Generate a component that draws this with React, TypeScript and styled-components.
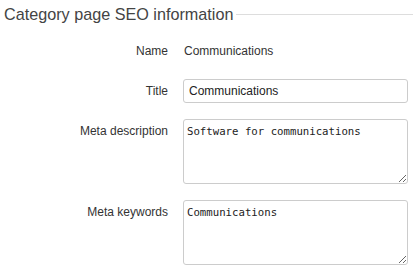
import React from "react";
import styled, { createGlobalStyle } from "styled-components";

const Global = createGlobalStyle`
  html, body { margin: 0; padding: 0; background: #fff; }
  body { font-family: "Liberation Sans", Arial, sans-serif; color: #333; }
`;

const Page = styled.div`
  padding: 0 5px 0 4px;
`;

const Legend = styled.div`
  display: flex;
  align-items: center;
  gap: 3px;
  height: 29px;
  margin-bottom: 10px;
`;

const LegendText = styled.span`
  font-size: 16.2px;
  color: #444;
  white-space: nowrap;
`;

const LegendLine = styled.span`
  flex: 1;
  height: 1px;
  background: #ddd;
  margin-right: -5px;
`;

const Form = styled.div`
  display: grid;
  grid-template-columns: 164px 1fr;
  column-gap: 15px;
  row-gap: 16px;
`;

const Label = styled.div<{ $top?: boolean }>`
  font-size: 12px;
  text-align: right;
  align-self: ${(p) => (p.$top ? "start" : "center")};
  padding-top: ${(p) => (p.$top ? "5px" : "0")};
  margin-top: ${(p) => (p.$top ? "0" : "-1px")};
  color: #333;
`;

const Value = styled.div`
  font-size: 12px;
  height: 24px;
  line-height: 24px;
  padding-left: 1px;
  color: #333;
`;

const TextInput = styled.input`
  box-sizing: border-box;
  width: 100%;
  height: 24px;
  border: 1px solid #ccc;
  border-radius: 3px;
  padding: 0 5px;
  font-family: "Liberation Sans", Arial, sans-serif;
  font-size: 12px;
  color: #222;
  outline: none;
`;

const TextArea = styled.textarea`
  box-sizing: border-box;
  width: 100%;
  height: 65px;
  border: 1px solid #ccc;
  border-radius: 3px;
  padding: 5px 3px 4px;
  font-family: "DejaVu Sans Mono", "Liberation Mono", monospace;
  font-size: 10.7px;
  color: #222;
  outline: none;
  display: block;
`;

export default function App() {
  return (
    <Page>
      <Global />
      <Legend>
        <LegendText>Category page SEO information</LegendText>
        <LegendLine />
      </Legend>
      <Form>
        <Label>Name</Label>
        <Value>Communications</Value>
        <Label>Title</Label>
        <TextInput defaultValue="Communications" />
        <Label $top>Meta description</Label>
        <TextArea defaultValue="Software for communications" />
        <Label $top>Meta keywords</Label>
        <TextArea defaultValue="Communications" />
      </Form>
    </Page>
  );
}
